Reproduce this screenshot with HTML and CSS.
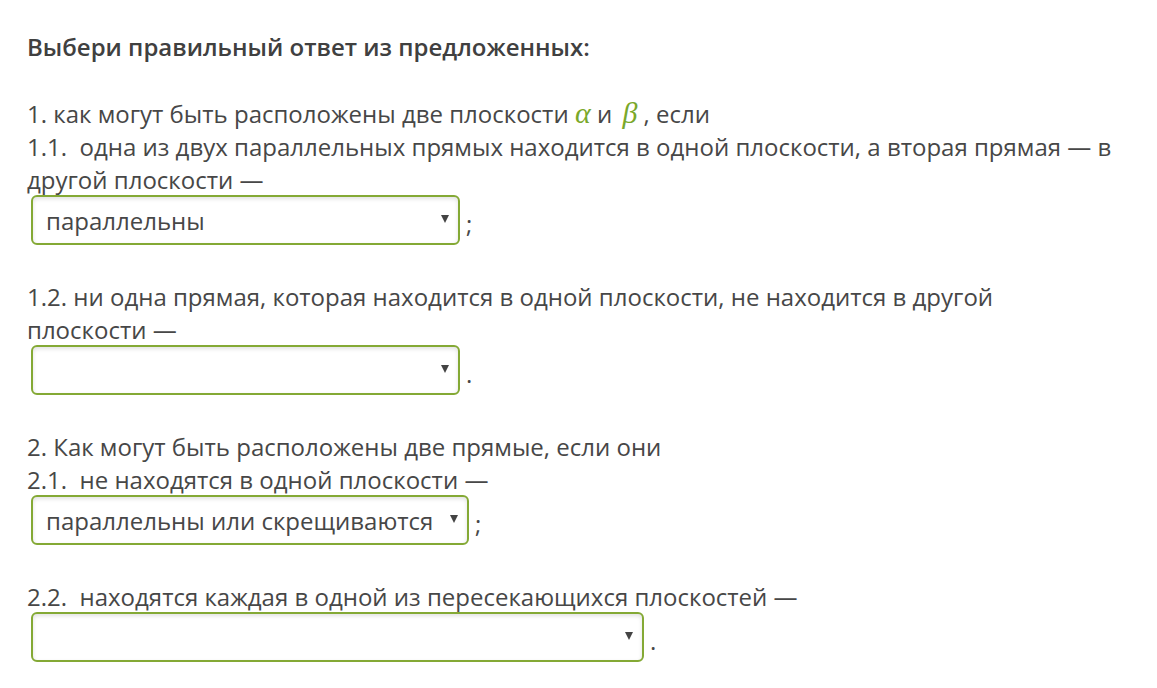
FILE: index.html
```html
<!DOCTYPE html>
<html lang="ru">
<head>
<meta charset="utf-8">
<link rel="stylesheet" href="styles.css">
</head>
<body>
<div class="page">
  <div class="title">Выбери правильный ответ из предложенных:</div>

  <div class="block first">
    <p class="line">1. как могут быть расположены две плоскости <span class="math">α</span> и <span class="math beta">β</span> , если</p>
    <p class="line">1.1.&nbsp; одна из двух параллельных прямых находится в одной плоскости, а вторая прямая — в другой плоскости —</p>
    <div class="answer">
      <div class="select w1"><span class="value">параллельны</span><span class="arrow"></span></div>
      <span class="punct">;</span>
    </div>
  </div>

  <div class="block">
    <p class="line">1.2. ни одна прямая, которая находится в одной плоскости, не находится в другой плоскости —</p>
    <div class="answer">
      <div class="select w1"><span class="value"></span><span class="arrow"></span></div>
      <span class="punct">.</span>
    </div>
  </div>

  <div class="block">
    <p class="line">2. Как могут быть расположены две прямые, если они</p>
    <p class="line">2.1.&nbsp; не находятся в одной плоскости —</p>
    <div class="answer">
      <div class="select w2"><span class="value">параллельны или скрещиваются</span><span class="arrow"></span></div>
      <span class="punct">;</span>
    </div>
  </div>

  <div class="block">
    <p class="line">2.2.&nbsp; находятся каждая в одной из пересекающихся плоскостей —</p>
    <div class="answer">
      <div class="select w3"><span class="value"></span><span class="arrow"></span></div>
      <span class="punct">.</span>
    </div>
  </div>
</div>
</body>
</html>
```

FILE: styles.css
```css
html, body {
  margin: 0;
  padding: 0;
  background: #ffffff;
}

.page {
  padding: 30px 41px 0 27px;
  font-family: "Open Sans", "Noto Sans", sans-serif;
  font-size: 24px;
  line-height: 33px;
  color: #474747;
}

.title {
  font-weight: 600;
  color: #404040;
}

.block {
  margin-top: 35px;
}

.block.first {
  margin-top: 33px;
}

.line {
  margin: 0;
}

.math {
  font-family: "Liberation Serif", "DejaVu Serif", serif;
  font-style: italic;
  color: #7aa82a;
  font-size: 30px;
}

.math.beta {
  margin-left: 4px;
}

.answer {
  display: flex;
  align-items: center;
  margin-left: 4px;
  margin-top: -1px;
}

.select {
  box-sizing: border-box;
  height: 50px;
  border: 2px solid #84a935;
  border-radius: 6px;
  background: #fff;
  box-shadow: inset 0 2px 4px rgba(0, 0, 0, 0.12);
  display: flex;
  align-items: center;
  justify-content: space-between;
  padding: 0 9px 0 13px;
  color: #474747;
}

.w1 { width: 429px; }
.w2 { width: 438px; }
.w3 { width: 613px; }

.value {
  white-space: nowrap;
}

.arrow {
  width: 0;
  height: 0;
  border-left: 4px solid transparent;
  border-right: 4px solid transparent;
  border-top: 8px solid #444;
  margin-top: -2px;
}

.punct {
  margin-left: 6px;
  padding-top: 6px;
}
```
